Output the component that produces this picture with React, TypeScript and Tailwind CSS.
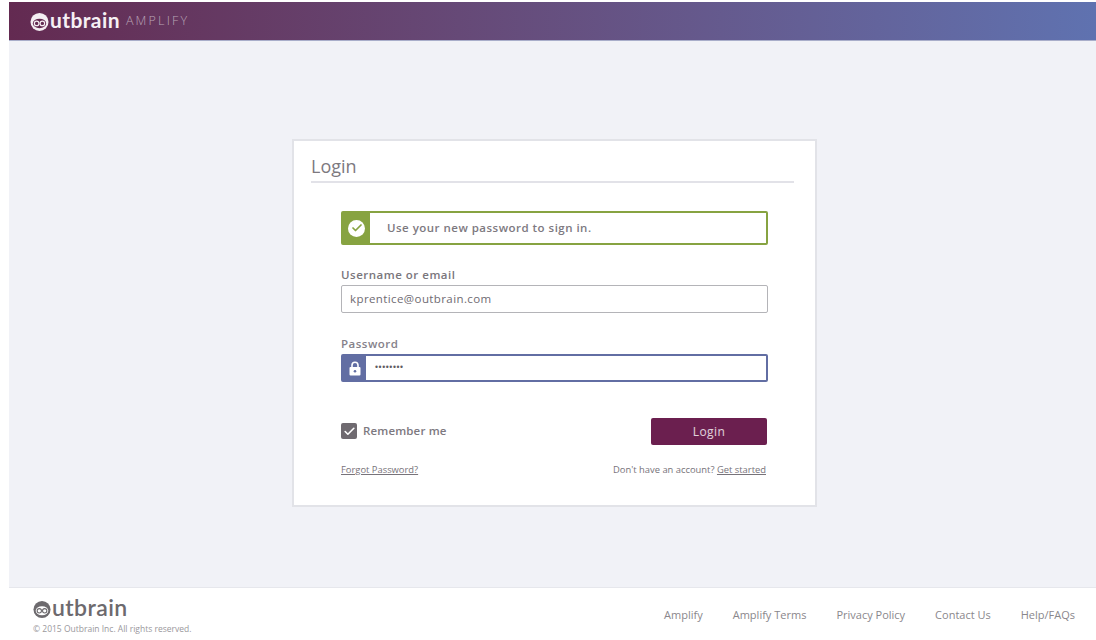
import { Check } from 'lucide-react'

const OPEN = "font-['Open_Sans',sans-serif]"

const LogoMark = ({ size, face, eye }: { size: number; face: string; eye: string }) => (
  <svg width={size} height={size} viewBox="0 0 20 20" className="shrink-0">
    <circle cx="10" cy="10.5" r="9.5" fill={face} />
    <path d="M3 9 C5 3 15 3 17 9 Z" fill={face} />
    <ellipse cx="10" cy="12" rx="7" ry="5" fill={eye} />
    <circle cx="7" cy="12" r="2.4" fill="none" stroke={face} strokeWidth="1.2" />
    <circle cx="13" cy="12" r="2.4" fill="none" stroke={face} strokeWidth="1.2" />
  </svg>
)

const footerLinks = ['Amplify', 'Amplify Terms', 'Privacy Policy', 'Contact Us', 'Help/FAQs']

export default function App() {
  return (
    <div className={`${OPEN} h-[640px] w-[1096px] overflow-hidden bg-white pl-[9px] pt-[2px] flex flex-col`}>
      <header className="h-[39px] shrink-0 bg-gradient-to-r from-[#632a51] to-[#5f72b0] flex items-center pl-[21px] border-b border-[#a9aeca]">
        <LogoMark size={19} face="#f4eef2" eye="#632a51" />
        <span className="font-['Lato',sans-serif] font-bold text-[21px] tracking-[0.4px] leading-none text-[#f6f0f4] ml-[1px] -mt-[3px]">
          utbrain
        </span>
        <span className="text-[12.5px] tracking-[2.2px] text-[#b9a3b5] ml-[6px] font-light">AMPLIFY</span>
      </header>

      <main className="h-[547px] shrink-0 bg-[#f1f2f7] pt-[98px] pl-[283px] border-b border-[#e6e7ec]">
        <div className="w-[525px] h-[368px] bg-white border-2 border-[#e2e3e8] pl-[17px] pr-[21px]">
          <div className="h-[42px] border-b-2 border-[#e2e2e8] flex items-end pb-[2px]">
            <h1 className="text-[18px] leading-[26px] text-[#7d797f]">Login</h1>
          </div>

          <div className="ml-[30px] mr-[26px] mt-[28px]">
            <div className="h-[34px] flex border-2 border-[#87a341] rounded-[2px]">
              <div className="w-[27px] bg-[#87a341] flex items-center justify-center">
                <div className="w-[17px] h-[17px] rounded-full bg-white flex items-center justify-center">
                  <Check size={12} strokeWidth={3.5} className="text-[#87a341]" />
                </div>
              </div>
              <p className="ml-[17px] text-[11.5px] leading-[30px] font-semibold tracking-[0.48px] text-[#7d797f]">
                Use your new password to sign in.
              </p>
            </div>

            <label className="block mt-[21px] text-[11.5px] leading-[18px] font-semibold tracking-[0.5px] text-[#7a767c]">
              Username or email
            </label>
            <div className="h-[28px] mt-[1px] border border-[#b4b4b8] rounded-[2px] pl-[8px] text-[11.5px] leading-[26px] tracking-[0.4px] font-medium text-[#6f6b72]">
              kprentice@outbrain.com
            </div>

            <label className="block mt-[22px] text-[11.5px] leading-[18px] font-semibold tracking-[0.5px] text-[#85818a]">
              Password
            </label>
            <div className="h-[28px] mt-[1px] flex border-2 border-[#626ea3] rounded-[2px]">
              <div className="w-[23px] bg-[#626ea3] flex items-center justify-center">
                <svg width="12" height="15" viewBox="0 0 12 15" fill="none">
                  <path d="M3 7V4.2a3 3 0 0 1 6 0V7" stroke="#ffffff" strokeWidth="1.6" />
                  <rect x="0.5" y="6" width="11" height="8.5" rx="1" fill="#ffffff" />
                  <circle cx="6" cy="10.2" r="1.3" fill="#626ea3" />
                </svg>
              </div>
              <span className="ml-[9px] text-[8.5px] leading-[23px] tracking-[0.6px] text-[#5f5b62] font-['Liberation_Sans',sans-serif]">
                ••••••••
              </span>
            </div>

            <div className="mt-[36px] flex items-center justify-between pr-[1px]">
              <div className="flex items-center gap-[6px] -mt-[1px]">
                <div className="w-[16px] h-[16px] rounded-[2px] bg-[#6f6a70] flex items-center justify-center">
                  <Check size={13} strokeWidth={3} className="text-white" />
                </div>
                <span className="text-[11.5px] font-semibold tracking-[0.15px] text-[#7d797f]">Remember me</span>
              </div>
              <button className="w-[116px] h-[27px] rounded-[2px] bg-[#6b1f4f] text-white/80 text-[12px] tracking-[0.4px]">
                Login
              </button>
            </div>

            <div className="mt-[18px] flex justify-between pr-[2px] text-[9.4px] leading-[14px] text-[#77737a]">
              <a className="underline">Forgot Password?</a>
              <span>
                Don't have an account? <a className="underline">Get started</a>
              </span>
            </div>
          </div>
        </div>
      </main>

      <footer className="flex-1 flex justify-between pl-[24px] pr-[21px]">
        <div className="pt-[11px]">
          <div className="flex items-center h-[20px]">
            <LogoMark size={18} face="#6d6a6e" eye="#ffffff" />
            <span className="font-['Lato',sans-serif] font-semibold text-[23px] tracking-[0.4px] leading-none text-[#6d6a6e] ml-[1px] -mt-[3px]">
              utbrain
            </span>
          </div>
          <p className="mt-[4px] text-[8.5px] leading-[12px] text-[#9a989c]">© 2015 Outbrain Inc. All rights reserved.</p>
        </div>
        <nav className="flex gap-[30px] pt-[19px] text-[11px] leading-[16px] text-[#8a878c]">
          {footerLinks.map((link) => (
            <a key={link}>{link}</a>
          ))}
        </nav>
      </footer>
    </div>
  )
}
